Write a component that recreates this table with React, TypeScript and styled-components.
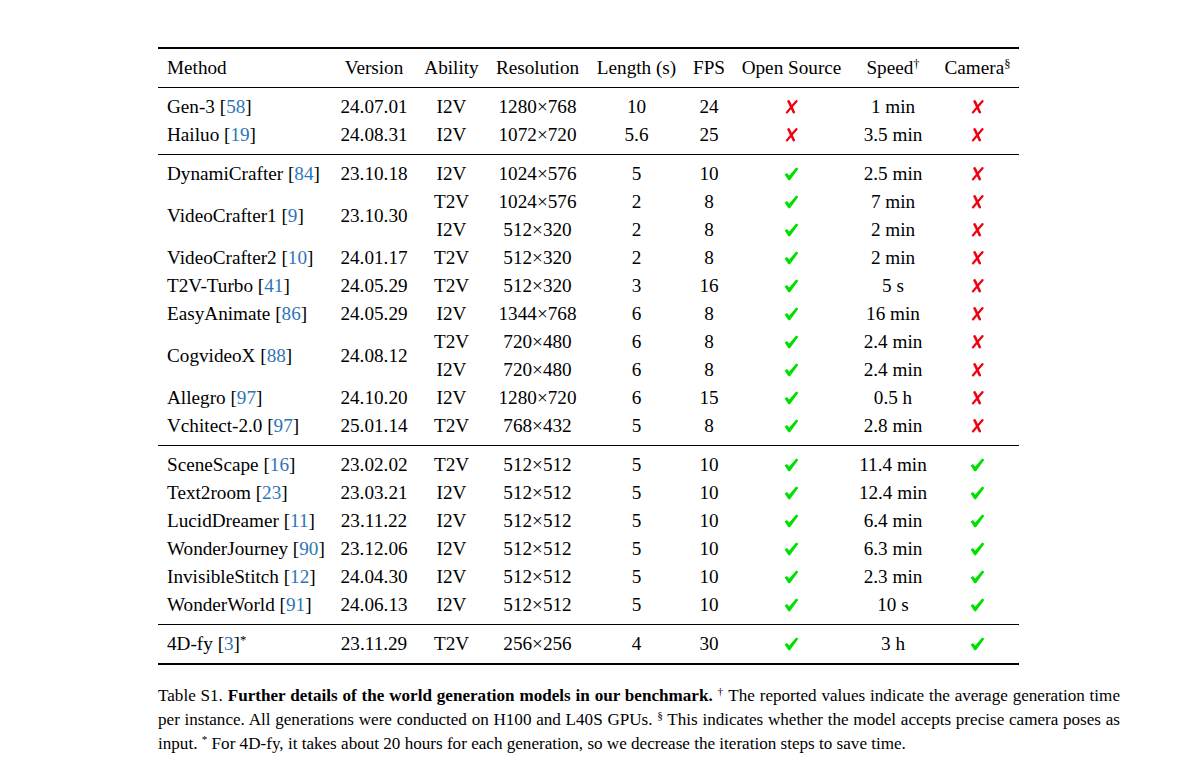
import styled, { createGlobalStyle } from "styled-components"

interface Row {
  method?: string
  cite?: string
  star?: boolean
  version?: string
  span?: number
  cont?: boolean
  ability: string
  res: string
  len: string
  fps: string
  open: boolean
  speed: string
  camera: boolean
}

const groups: Row[][] = [
  [
    { method: "Gen-3", cite: "58", version: "24.07.01", ability: "I2V", res: "1280×768", len: "10", fps: "24", open: false, speed: "1 min", camera: false },
    { method: "Hailuo", cite: "19", version: "24.08.31", ability: "I2V", res: "1072×720", len: "5.6", fps: "25", open: false, speed: "3.5 min", camera: false },
  ],
  [
    { method: "DynamiCrafter", cite: "84", version: "23.10.18", ability: "I2V", res: "1024×576", len: "5", fps: "10", open: true, speed: "2.5 min", camera: false },
    { method: "VideoCrafter1", cite: "9", version: "23.10.30", span: 2, ability: "T2V", res: "1024×576", len: "2", fps: "8", open: true, speed: "7 min", camera: false },
    { cont: true, ability: "I2V", res: "512×320", len: "2", fps: "8", open: true, speed: "2 min", camera: false },
    { method: "VideoCrafter2", cite: "10", version: "24.01.17", ability: "T2V", res: "512×320", len: "2", fps: "8", open: true, speed: "2 min", camera: false },
    { method: "T2V-Turbo", cite: "41", version: "24.05.29", ability: "T2V", res: "512×320", len: "3", fps: "16", open: true, speed: "5 s", camera: false },
    { method: "EasyAnimate", cite: "86", version: "24.05.29", ability: "I2V", res: "1344×768", len: "6", fps: "8", open: true, speed: "16 min", camera: false },
    { method: "CogvideoX", cite: "88", version: "24.08.12", span: 2, ability: "T2V", res: "720×480", len: "6", fps: "8", open: true, speed: "2.4 min", camera: false },
    { cont: true, ability: "I2V", res: "720×480", len: "6", fps: "8", open: true, speed: "2.4 min", camera: false },
    { method: "Allegro", cite: "97", version: "24.10.20", ability: "I2V", res: "1280×720", len: "6", fps: "15", open: true, speed: "0.5 h", camera: false },
    { method: "Vchitect-2.0", cite: "97", version: "25.01.14", ability: "T2V", res: "768×432", len: "5", fps: "8", open: true, speed: "2.8 min", camera: false },
  ],
  [
    { method: "SceneScape", cite: "16", version: "23.02.02", ability: "T2V", res: "512×512", len: "5", fps: "10", open: true, speed: "11.4 min", camera: true },
    { method: "Text2room", cite: "23", version: "23.03.21", ability: "I2V", res: "512×512", len: "5", fps: "10", open: true, speed: "12.4 min", camera: true },
    { method: "LucidDreamer", cite: "11", version: "23.11.22", ability: "I2V", res: "512×512", len: "5", fps: "10", open: true, speed: "6.4 min", camera: true },
    { method: "WonderJourney", cite: "90", version: "23.12.06", ability: "I2V", res: "512×512", len: "5", fps: "10", open: true, speed: "6.3 min", camera: true },
    { method: "InvisibleStitch", cite: "12", version: "24.04.30", ability: "I2V", res: "512×512", len: "5", fps: "10", open: true, speed: "2.3 min", camera: true },
    { method: "WonderWorld", cite: "91", version: "24.06.13", ability: "I2V", res: "512×512", len: "5", fps: "10", open: true, speed: "10 s", camera: true },
  ],
  [
    { method: "4D-fy", cite: "3", star: true, version: "23.11.29", ability: "T2V", res: "256×256", len: "4", fps: "30", open: true, speed: "3 h", camera: true },
  ],
]

const widths = [174, 84, 71, 101, 97, 48, 117, 86, 83]

function Check() {
  return (
    <Mark width="15" height="14" viewBox="0 0 15 14">
      <path d="M0.6 7.6 L3.0 5.9 L5.2 8.5 L12.2 0.4 L14.4 1.7 L6.0 13.2 L4.4 13.2 Z" fill="#00e000" />
    </Mark>
  )
}

function Cross() {
  return (
    <Mark width="13" height="14" viewBox="0 0 13 14">
      <path d="M3.6 1.4 C5.2 4.4 7 8.4 8.8 12.2" stroke="#f00010" strokeWidth="2.6" strokeLinecap="round" fill="none" />
      <path d="M11.4 1.2 C8.2 4.8 5 8.6 2 12.4" stroke="#f00010" strokeWidth="2.3" strokeLinecap="round" fill="none" />
    </Mark>
  )
}

export default function App() {
  return (
    <>
      <GlobalStyle />
      <Page>
        <Table>
          <colgroup>
            {widths.map((w, i) => (
              <col key={i} style={{ width: w }} />
            ))}
          </colgroup>
          <thead>
            <tr>
              <Head $left>Method</Head>
              <Head>Version</Head>
              <Head>Ability</Head>
              <Head>Resolution</Head>
              <Head>Length (s)</Head>
              <Head>FPS</Head>
              <Head>Open Source</Head>
              <Head>
                Speed<Sup>†</Sup>
              </Head>
              <Head>
                Camera<Sup>§</Sup>
              </Head>
            </tr>
          </thead>
          {groups.map((rows, g) => (
            <tbody key={g}>
              {rows.map((r, i) => {
                const first = i === 0
                const last = i === rows.length - 1
                const rule = last && g < groups.length - 1
                return (
                  <BodyRow key={i} $first={first} $last={last} $rule={rule}>
                    {!r.cont && (
                      <>
                        <Cell $left rowSpan={r.span}>
                          {r.method} [<Cite>{r.cite}</Cite>]{r.star && <Sup>*</Sup>}
                        </Cell>
                        <Cell rowSpan={r.span}>{r.version}</Cell>
                      </>
                    )}
                    <Cell>{r.ability}</Cell>
                    <Cell>{r.res}</Cell>
                    <Cell>{r.len}</Cell>
                    <Cell>{r.fps}</Cell>
                    <Cell>{r.open ? <Check /> : <Cross />}</Cell>
                    <Cell>{r.speed}</Cell>
                    <Cell>{r.camera ? <Check /> : <Cross />}</Cell>
                  </BodyRow>
                )
              })}
            </tbody>
          ))}
        </Table>
        <Caption>
          Table S1. <b>Further details of the world generation models in our benchmark.</b> <Sup>†</Sup> The reported
          values indicate the average generation time per instance. All generations were conducted on H100 and L40S
          GPUs. <Sup>§</Sup> This indicates whether the model accepts precise camera poses as input. <Sup>*</Sup> For
          4D-fy, it takes about 20 hours for each generation, so we decrease the iteration steps to save time.
        </Caption>
      </Page>
    </>
  )
}

const GlobalStyle = createGlobalStyle`
  html, body {
    margin: 0;
    background: #fff;
  }
  body {
    font-family: "Liberation Serif", "Times New Roman", serif;
    color: #000;
  }
`

const Page = styled.div`
  padding: 47px 0 0 158px;
  width: 962px;
`

const Table = styled.table`
  width: 861px;
  table-layout: fixed;
  border-collapse: separate;
  border-spacing: 0;
  border-top: 2px solid #000;
  border-bottom: 2px solid #000;
  font-size: 19.2px;
`

const Head = styled.th<{ $left?: boolean }>`
  font-weight: 400;
  text-align: ${(p) => (p.$left ? "left" : "center")};
  padding: 5px 0 5px ${(p) => (p.$left ? "9px" : "0")};
  height: 28px;
  line-height: 28px;
  white-space: nowrap;
  border-bottom: 1px solid #000;
`

const BodyRow = styled.tr<{ $first: boolean; $last: boolean; $rule: boolean }>`
  & > td {
    padding-top: ${(p) => (p.$first ? "5px" : "0")};
    padding-bottom: ${(p) => (p.$last ? "5px" : "0")};
    border-bottom: ${(p) => (p.$rule ? "1px solid #000" : "none")};
  }
`

const Cell = styled.td<{ $left?: boolean }>`
  text-align: ${(p) => (p.$left ? "left" : "center")};
  padding-left: ${(p) => (p.$left ? "9px" : "0")};
  padding-right: 0;
  height: 28px;
  line-height: 28px;
  white-space: nowrap;
  vertical-align: middle;
`

const Cite = styled.span`
  color: #2e75b6;
`

const Sup = styled.sup`
  font-size: 0.66em;
  line-height: 0;
  vertical-align: 0.5em;
`

const Mark = styled.svg`
  display: inline-block;
  vertical-align: -1px;
`

const Caption = styled.p`
  margin: 19px 0 0;
  font-size: 17.1px;
  line-height: 24px;
  text-align: justify;
`
